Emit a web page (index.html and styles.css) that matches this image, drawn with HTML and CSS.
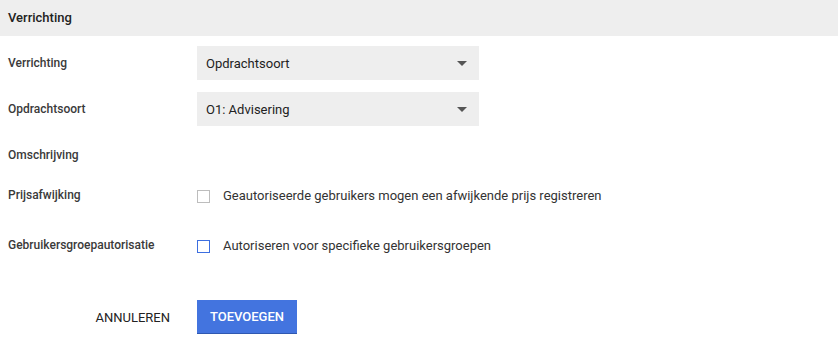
FILE: index.html
```html
<!DOCTYPE html>
<html lang="nl">
<head>
<meta charset="utf-8">
<title>Verrichting</title>
<link rel="stylesheet" href="styles.css">
</head>
<body>
<div class="panel">
  <div class="panel-header">Verrichting</div>
  <form class="form">
    <div class="row row-select">
      <label class="label">Verrichting</label>
      <div class="select">
        <span>Opdrachtsoort</span>
        <svg class="caret" width="10" height="5" viewBox="0 0 10 5"><path d="M0 0h10L5 5z" fill="#555"/></svg>
      </div>
    </div>
    <div class="row row-select">
      <label class="label">Opdrachtsoort</label>
      <div class="select">
        <span>O1: Advisering</span>
        <svg class="caret" width="10" height="5" viewBox="0 0 10 5"><path d="M0 0h10L5 5z" fill="#555"/></svg>
      </div>
    </div>
    <div class="row row-plain">
      <label class="label">Omschrijving</label>
      <div></div>
    </div>
    <div class="row row-check row-check-1">
      <label class="label">Prijsafwijking</label>
      <label class="check"><span class="box"></span><span>Geautoriseerde gebruikers mogen een afwijkende prijs registreren</span></label>
    </div>
    <div class="row row-check row-check-2">
      <label class="label">Gebruikersgroepautorisatie</label>
      <label class="check"><span class="box box-focus"></span><span>Autoriseren voor specifieke gebruikersgroepen</span></label>
    </div>
    <div class="actions">
      <div class="actions-left"><button type="button" class="btn btn-flat">ANNULEREN</button></div>
      <div><button type="button" class="btn btn-primary">TOEVOEGEN</button></div>
    </div>
  </form>
</div>
</body>
</html>
```

FILE: styles.css
```css
html, body {
  margin: 0;
  padding: 0;
  background: #ffffff;
}
body {
  font-family: Roboto, "Liberation Sans", Arial, sans-serif;
  color: #333333;
  font-size: 13px;
}
.panel-header {
  height: 36px;
  background: #eeeeee;
  display: flex;
  align-items: center;
  padding: 0 8px;
  padding-bottom: 2px;
  box-sizing: border-box;
  font-size: 13px;
  font-weight: 500;
  color: #222222;
}
.form {
  padding-top: 10px;
}
.row {
  display: grid;
  grid-template-columns: 189px 1fr;
  align-items: center;
  padding-left: 8px;
  height: 34px;
}
.row + .row {
  margin-top: 12px;
}
.label {
  font-size: 12px;
  font-weight: 500;
  color: #3a3a3a;
}
.select {
  width: 282px;
  height: 34px;
  box-sizing: border-box;
  background: #eeeeee;
  display: flex;
  align-items: center;
  justify-content: space-between;
  padding: 0 12px 0 9px;
  font-size: 13px;
  color: #222222;
}
.caret {
  display: block;
  margin-top: 1px;
}
.row.row-check-1 {
  margin-top: 6px;
}
.row.row-check-2 {
  margin-top: 16px;
}
.row-check .label {
  margin-top: -1px;
}
.check {
  display: flex;
  align-items: center;
  gap: 13px;
  font-size: 13px;
  color: #333333;
}
.box {
  width: 13px;
  height: 13px;
  box-sizing: border-box;
  border: 1px solid #bdbdbd;
  background: #ffffff;
  flex: none;
  margin-top: 3px;
}
.box-focus {
  border-color: #3d6fe0;
}
.actions {
  display: grid;
  grid-template-columns: 197px 1fr;
  margin-top: 38px;
  height: 34px;
}
.actions-left {
  display: flex;
  justify-content: flex-end;
  padding-right: 13px;
}
.btn {
  font-family: Roboto, "Liberation Sans", Arial, sans-serif;
  font-size: 13px;
  border: 0;
  height: 34px;
  padding: 0 14px;
  cursor: pointer;
}
.btn-flat {
  background: transparent;
  color: #222222;
  font-weight: 400;
}
.btn-primary {
  background: #4374df;
  color: #ffffff;
  font-weight: 500;
  width: 100px;
  height: 33px;
  border-bottom: 1px solid #2f58b0;
  box-sizing: content-box;
  padding: 0;
}
```
